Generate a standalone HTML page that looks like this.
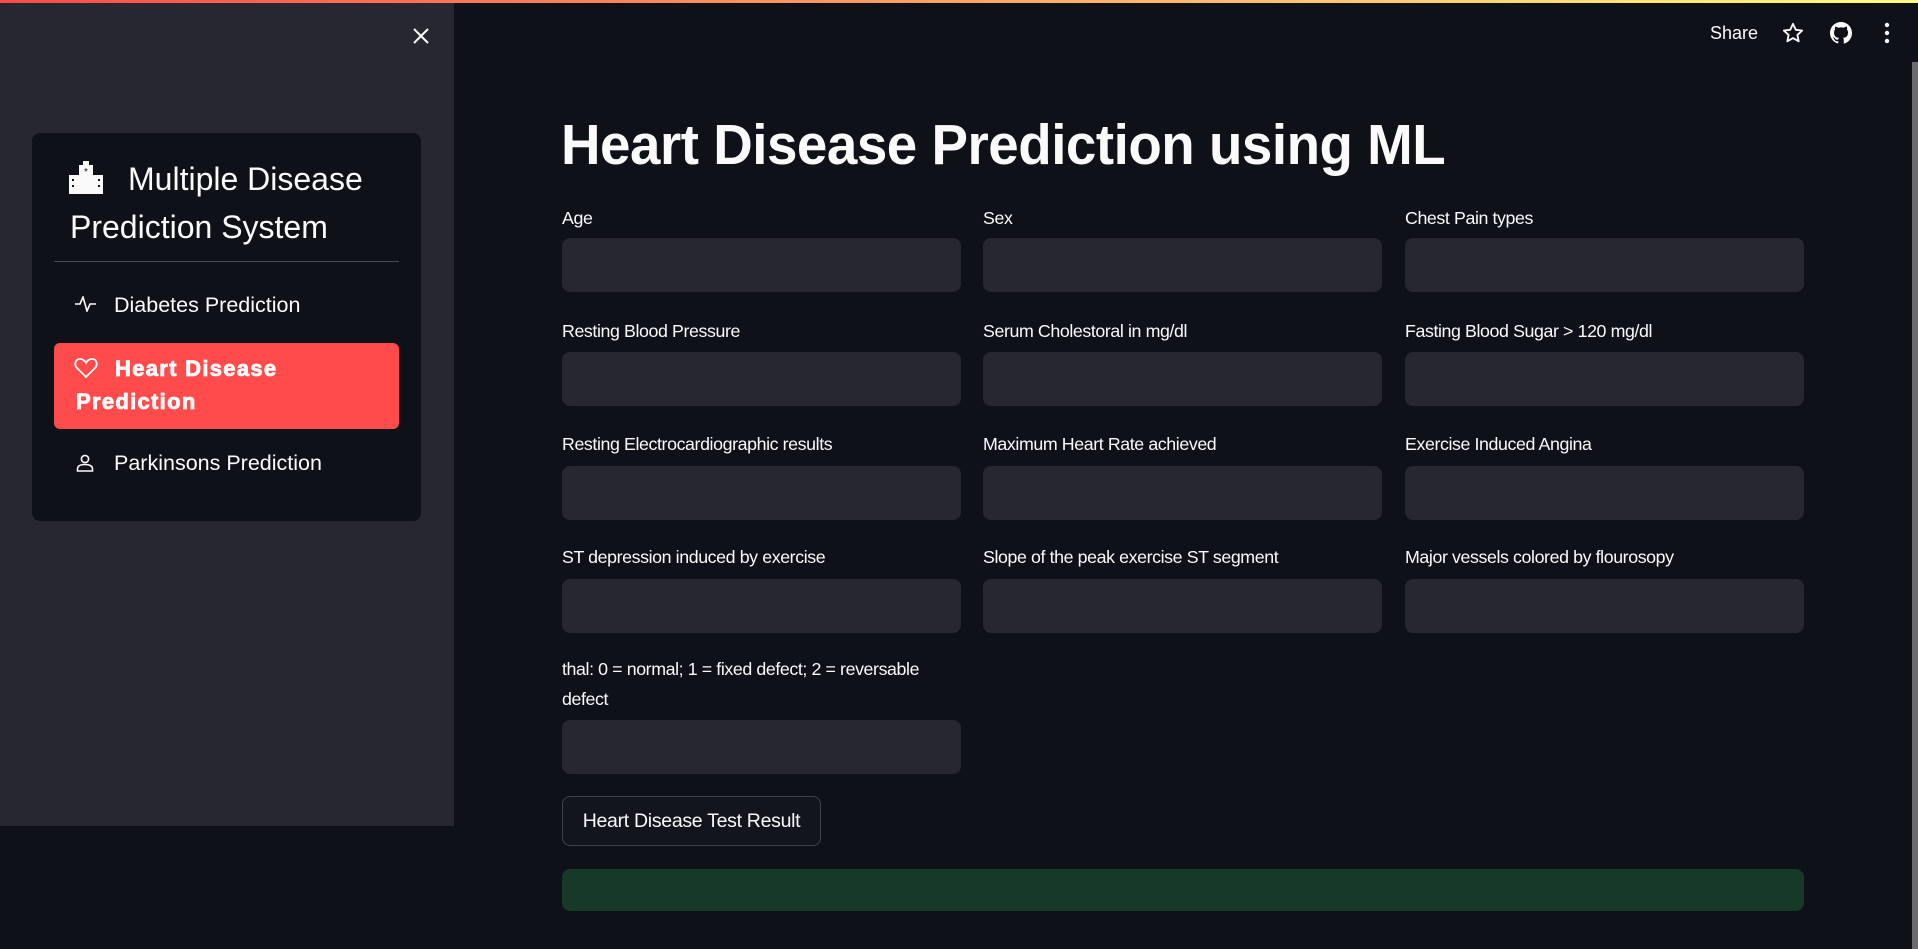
<!DOCTYPE html>
<html><head><meta charset="utf-8"><style>
*{margin:0;padding:0;box-sizing:border-box}
body{width:1918px;height:949px;background:#0e1117;position:relative;overflow:hidden;font-family:"Liberation Sans",sans-serif;color:#fafafa}
.top{position:absolute;left:0;top:0;width:1918px;height:3px;background:linear-gradient(90deg,#ff4b4b,#fffd80)}
.side{position:absolute;left:0;top:3px;width:454px;height:823px;background:#262730}
.card{position:absolute;left:32px;top:130px;width:389px;height:388px;background:#0e1117;border-radius:8px}
.abs{position:absolute}
.lbl{position:absolute;font-size:17.8px;color:#fafafa;letter-spacing:-0.4px;white-space:nowrap}
.in{position:absolute;width:399px;height:54px;background:#262730;border-radius:8px}
.scroll{position:absolute;left:1912px;top:62px;width:6px;height:887px;background:#6b6b70}
</style></head><body>
<div class="top"></div>
<div class="side">
 <svg class="abs" style="left:412px;top:24px" width="18" height="18" viewBox="0 0 18 18"><path d="M2 2L16 16M16 2L2 16" stroke="#fafafa" stroke-width="2"/></svg>
 <div class="card">
  <svg class="abs" style="left:37px;top:28px" width="34" height="33" viewBox="0 0 34 33"><path d="M10 33V4h4V0h6v4h4v29zM0 33V14h10v19zM24 33V14h10v19z" fill="#fafafa"/><text x="17" y="14" font-size="10" text-anchor="middle" fill="#0e1117">*</text><rect x="3" y="18" width="2" height="2" fill="#0e1117"/><rect x="3" y="24" width="2" height="2" fill="#0e1117"/><rect x="29" y="18" width="2" height="2" fill="#0e1117"/><rect x="29" y="24" width="2" height="2" fill="#0e1117"/></svg>
  <div class="abs" style="left:96px;top:28px;font-size:32px;white-space:nowrap">Multiple Disease</div>
  <div class="abs" style="left:38px;top:76px;font-size:32px;white-space:nowrap">Prediction System</div>
  <div class="abs" style="left:22px;top:128px;width:345px;height:1px;background:#4a4b52"></div>
  <svg class="abs" style="left:43px;top:163px" width="24" height="16" viewBox="0 0 24 16"><path d="M0 8h5l3-7 4 14 3-7h6" stroke="#fafafa" stroke-width="1.6" fill="none"/></svg>
  <div class="abs" style="left:82px;top:160px;font-size:21.5px">Diabetes Prediction</div>
  <div class="abs" style="left:22px;top:210px;width:345px;height:86px;background:#ff4b4b;border-radius:6px">
   <svg class="abs" style="left:20px;top:14px" width="24" height="22" viewBox="0 0 24 22"><path d="M12 20L3 11C0 8 1 2 6 2c3 0 5 2 6 4 1-2 3-4 6-4 5 0 6 6 3 9z" stroke="#fff" stroke-width="1.8" fill="none"/></svg>
   <div class="abs" style="left:61px;top:13px;font-size:22px;font-weight:bold;white-space:nowrap;letter-spacing:1.3px;-webkit-text-stroke:0.8px #fff">Heart Disease</div>
   <div class="abs" style="left:22px;top:46px;font-size:22px;font-weight:bold;letter-spacing:1.3px;-webkit-text-stroke:0.8px #fff">Prediction</div>
  </div>
  <svg class="abs" style="left:44px;top:321px" width="18" height="18" viewBox="0 0 18 18"><circle cx="9" cy="5" r="3.6" stroke="#fafafa" stroke-width="1.6" fill="none"/><path d="M1.5 17v-2c0-3 3-4.5 7.5-4.5s7.5 1.5 7.5 4.5v2z" stroke="#fafafa" stroke-width="1.6" fill="none"/></svg>
  <div class="abs" style="left:82px;top:318px;font-size:21.5px">Parkinsons Prediction</div>
 </div>
</div>
<div class="abs" style="left:1710px;top:23px;font-size:18px">Share</div>
<svg class="abs" style="left:1782px;top:22px" width="22" height="22" viewBox="0 0 24 24"><path d="M12 2l3 6.5 7 .8-5.2 4.8 1.4 7-6.2-3.6-6.2 3.6 1.4-7L2 9.3l7-.8z" stroke="#fafafa" stroke-width="2" fill="none" stroke-linejoin="round"/></svg>
<svg class="abs" style="left:1830px;top:22px" width="22" height="22" viewBox="0 0 16 16"><path fill="#fafafa" d="M8 0C3.580 0 0 3.58 0 8c0 3.54 2.29 6.53 5.47 7.59.4.07.55-.17.55-.38v-1.330c-2.23.48-2.7-1.07-2.7-1.07-.36-.92-.89-1.17-.89-1.17-.73-.5.06-.49.06-.49.8.06 1.23.83 1.23.83.71 1.22 1.87.87 2.33.66.07-.52.28-.87.51-1.07-1.78-.2-3.64-.89-3.64-3.95 0-.87.31-1.59.82-2.15-.08-.2-.36-1.02.08-2.12 0 0 .67-.21 2.2.82a7.6 7.6 0 014 0c1.53-1.04 2.2-.82 2.2-.82.44 1.1.16 1.92.08 2.12.51.56.82 1.27.82 2.15 0 3.07-1.87 3.75-3.65 3.95.29.25.54.73.54 1.48v2.2c0 .21.15.46.55.38A8.01 8.01 0 0016 8c0-4.42-3.58-8-8-8z"/></svg>
<svg class="abs" style="left:1884px;top:22px" width="6" height="22" viewBox="0 0 6 22"><circle cx="3" cy="3" r="2.2" fill="#fafafa"/><circle cx="3" cy="11" r="2.2" fill="#fafafa"/><circle cx="3" cy="19" r="2.2" fill="#fafafa"/></svg>
<div class="scroll"></div>

<div class="abs" style="left:561px;top:112px;font-size:57px;font-weight:bold;white-space:nowrap;transform:scaleX(0.96);transform-origin:left top;letter-spacing:-0.5px">Heart Disease Prediction using ML</div>

<div class="lbl" style="left:562px;top:208px">Age</div>
<div class="lbl" style="left:983px;top:208px">Sex</div>
<div class="lbl" style="left:1405px;top:208px">Chest Pain types</div>
<div class="in" style="left:562px;top:238px"></div><div class="in" style="left:983px;top:238px"></div><div class="in" style="left:1405px;top:238px"></div>

<div class="lbl" style="left:562px;top:321px">Resting Blood Pressure</div>
<div class="lbl" style="left:983px;top:321px">Serum Cholestoral in mg/dl</div>
<div class="lbl" style="left:1405px;top:321px">Fasting Blood Sugar &gt; 120 mg/dl</div>
<div class="in" style="left:562px;top:352px"></div><div class="in" style="left:983px;top:352px"></div><div class="in" style="left:1405px;top:352px"></div>

<div class="lbl" style="left:562px;top:434px">Resting Electrocardiographic results</div>
<div class="lbl" style="left:983px;top:434px">Maximum Heart Rate achieved</div>
<div class="lbl" style="left:1405px;top:434px">Exercise Induced Angina</div>
<div class="in" style="left:562px;top:466px"></div><div class="in" style="left:983px;top:466px"></div><div class="in" style="left:1405px;top:466px"></div>

<div class="lbl" style="left:562px;top:547px">ST depression induced by exercise</div>
<div class="lbl" style="left:983px;top:547px">Slope of the peak exercise ST segment</div>
<div class="lbl" style="left:1405px;top:547px">Major vessels colored by flourosopy</div>
<div class="in" style="left:562px;top:579px"></div><div class="in" style="left:983px;top:579px"></div><div class="in" style="left:1405px;top:579px"></div>

<div class="lbl" style="left:562px;top:659px">thal: 0 = normal; 1 = fixed defect; 2 = reversable</div>
<div class="lbl" style="left:562px;top:689px">defect</div>
<div class="in" style="left:562px;top:720px"></div>

<div class="abs" style="left:562px;top:796px;width:259px;height:50px;border:1px solid rgba(250,250,250,0.2);border-radius:8px;background:#12151c;font-size:19.5px;line-height:48px;text-align:center;letter-spacing:-0.3px">Heart Disease Test Result</div>
<div class="abs" style="left:562px;top:869px;width:1242px;height:42px;background:#173928;border-radius:8px"></div>
</body></html>
